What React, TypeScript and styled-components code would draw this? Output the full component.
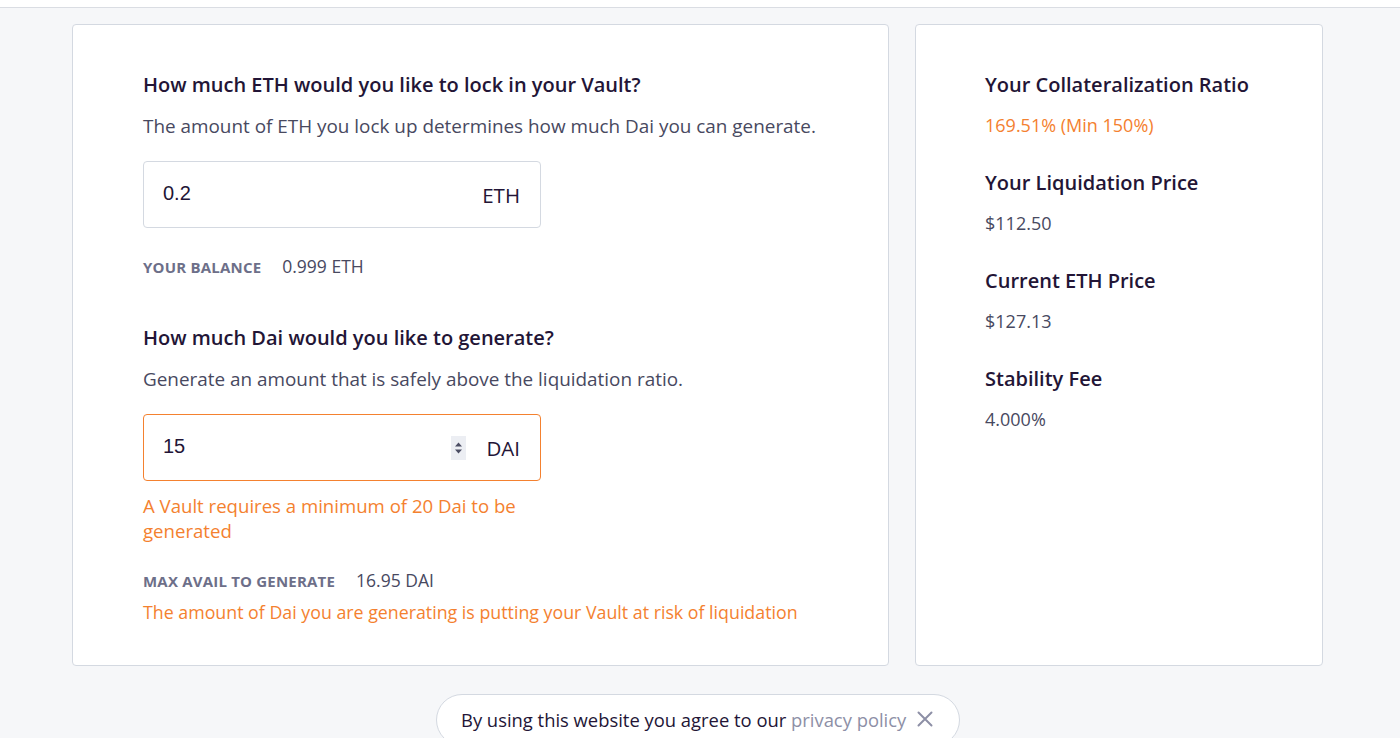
import React from "react";
import styled, { createGlobalStyle } from "styled-components";

const Global = createGlobalStyle`
  html, body { margin: 0; padding: 0; }
  body {
    background: #f6f7f9;
    font-family: "Open Sans", "Noto Sans", sans-serif;
    color: #231536;
    overflow: hidden;
  }
`;

const Page = styled.div`
  height: 738px;
  display: flex;
  flex-direction: column;
  overflow: hidden;
`;

const TopStrip = styled.div`
  flex-shrink: 0;
  height: 7px;
  background: #ffffff;
  border-bottom: 1px solid #dadde3;
`;

const Columns = styled.div`
  flex-shrink: 0;
  display: flex;
  gap: 26px;
  padding: 16px 0 0 72px;
`;

const Card = styled.div<{ $w: number }>`
  width: ${(p) => p.$w}px;
  height: 642px;
  box-sizing: border-box;
  background: #fff;
  border: 1px solid #d4d9e1;
  border-radius: 4px;
`;

const LeftBody = styled.div`
  padding: 46px 40px 0 70px;
  display: flex;
  flex-direction: column;
`;

const Heading = styled.div`
  font-size: 20px;
  font-weight: 600;
  line-height: 28px;
  color: #231536;
  white-space: nowrap;
`;

const Sub = styled.div`
  font-size: 18.9px;
  line-height: 28px;
  color: #48495f;
  margin-top: 13px;
  white-space: nowrap;
`;

const InputBox = styled.div<{ $error?: boolean }>`
  flex-shrink: 0;
  margin-top: 21px;
  width: 398px;
  height: 67px;
  box-sizing: border-box;
  border: 1px solid ${(p) => (p.$error ? "#f4812f" : "#d4d9e1")};
  border-radius: 4px;
  display: flex;
  align-items: center;
  padding: 0 20px 0 19px;
  font-family: "Liberation Sans", Arial, sans-serif;
  font-size: 20px;
  color: #231536;
`;

const Value = styled.div`
  flex: 1;
  margin-top: -3px;
`;

const Unit = styled.div`
  font-family: "Open Sans", "Noto Sans", sans-serif;
  font-size: 20.5px;
`;

const Spinner = styled.div`
  width: 15px;
  height: 24px;
  margin-right: 20px;
  display: flex;
  align-items: center;
  justify-content: center;
  background: #eceef3;
`;

const InfoRow = styled.div<{ $mt: number }>`
  display: flex;
  align-items: baseline;
  gap: 21px;
  margin-top: ${(p) => p.$mt}px;
  line-height: 22px;
`;

const Label = styled.span`
  font-size: 15px;
  font-weight: 700;
  letter-spacing: 0.2px;
  color: #6d6f89;
  text-transform: uppercase;
`;

const InfoValue = styled.span`
  font-size: 17.5px;
  color: #48495f;
`;

const ErrorText = styled.div<{ $mt: number; $w?: number; $size: number }>`
  color: #f4812f;
  font-size: ${(p) => p.$size}px;
  line-height: 25px;
  margin-top: ${(p) => p.$mt}px;
  ${(p) => (p.$w ? `width: ${p.$w}px;` : "")}
`;

const Section = styled.div<{ $mt: number }>`
  margin-top: ${(p) => p.$mt}px;
`;

const RightBody = styled.div`
  padding: 46px 40px 0 69px;
  display: flex;
  flex-direction: column;
  gap: 30px;
`;

const Stat = styled.div`
  display: flex;
  flex-direction: column;
  gap: 13px;
`;

const StatTitle = styled.div`
  font-size: 20px;
  font-weight: 600;
  line-height: 28px;
  color: #231536;
`;

const StatValue = styled.div<{ $warn?: boolean }>`
  font-size: 18px;
  line-height: 27px;
  color: ${(p) => (p.$warn ? "#f4812f" : "#48495f")};
`;

const BannerWrap = styled.div`
  flex-shrink: 0;
  display: flex;
  padding-left: 436px;
  margin-top: 28px;
`;

const Banner = styled.div`
  width: 524px;
  height: 52px;
  box-sizing: border-box;
  background: #fff;
  border: 1px solid #d4d9e1;
  border-radius: 26px;
  display: flex;
  align-items: center;
  padding: 0 24px 2px 24px;
  font-size: 18.4px;
  color: #231536;
  gap: 11px;
`;

const Link = styled.span`
  color: #8d8fa6;
`;

const Close = styled.span`
  display: flex;
`;

export default function App() {
  return (
    <Page>
      <Global />
      <TopStrip />
      <Columns>
        <Card $w={817}>
          <LeftBody>
            <Heading>How much ETH would you like to lock in your Vault?</Heading>
            <Sub>The amount of ETH you lock up determines how much Dai you can generate.</Sub>
            <InputBox>
              <Value>0.2</Value>
              <Unit>ETH</Unit>
            </InputBox>
            <InfoRow $mt={27}>
              <Label>Your Balance</Label>
              <InfoValue>0.999 ETH</InfoValue>
            </InfoRow>
            <Section $mt={46}>
              <Heading>How much Dai would you like to generate?</Heading>
              <Sub>Generate an amount that is safely above the liquidation ratio.</Sub>
            </Section>
            <InputBox $error>
              <Value>15</Value>
              <Spinner>
                <svg width="11" height="18" viewBox="0 0 11 18">
                  <path d="M2 7.5 L5.5 3.5 L9 7.5 Z" fill="#4b4d63" />
                  <path d="M2 10.5 L5.5 14.5 L9 10.5 Z" fill="#4b4d63" />
                </svg>
              </Spinner>
              <Unit>DAI</Unit>
            </InputBox>
            <ErrorText $mt={12} $w={398} $size={18.6}>
              A Vault requires a minimum of 20 Dai to be generated
            </ErrorText>
            <InfoRow $mt={26}>
              <Label>Max avail to generate</Label>
              <InfoValue>16.95 DAI</InfoValue>
            </InfoRow>
            <ErrorText $mt={8} $size={17.8}>
              The amount of Dai you are generating is putting your Vault at risk of liquidation
            </ErrorText>
          </LeftBody>
        </Card>
        <Card $w={408}>
          <RightBody>
            <Stat>
              <StatTitle>Your Collateralization Ratio</StatTitle>
              <StatValue $warn>169.51% (Min 150%)</StatValue>
            </Stat>
            <Stat>
              <StatTitle>Your Liquidation Price</StatTitle>
              <StatValue>$112.50</StatValue>
            </Stat>
            <Stat>
              <StatTitle>Current ETH Price</StatTitle>
              <StatValue>$127.13</StatValue>
            </Stat>
            <Stat>
              <StatTitle>Stability Fee</StatTitle>
              <StatValue>4.000%</StatValue>
            </Stat>
          </RightBody>
        </Card>
      </Columns>
      <BannerWrap>
        <Banner>
          <span>
            By using this website you agree to our <Link>privacy policy</Link>
          </span>
          <Close>
            <svg width="16" height="16" viewBox="0 0 16 16">
              <path d="M1.5 1.5 L14.5 14.5 M14.5 1.5 L1.5 14.5" stroke="#8d8fa6" strokeWidth="2" strokeLinecap="round" />
            </svg>
          </Close>
        </Banner>
      </BannerWrap>
    </Page>
  );
}
